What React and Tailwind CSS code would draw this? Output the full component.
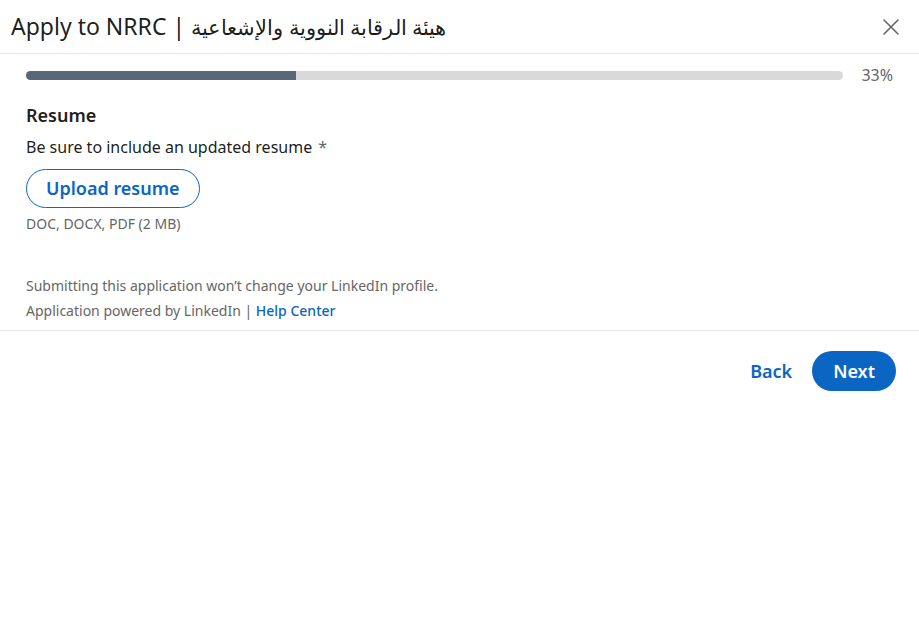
import React from "react";

const font = { fontFamily: '"Segoe UI", "Noto Sans", "Open Sans", Arial, sans-serif' };

function CloseIcon() {
  return (
    <svg width="24" height="24" viewBox="0 0 24 24" fill="none" stroke="#666666" strokeWidth="1.6" strokeLinecap="round">
      <path d="M5 5 L19 19 M19 5 L5 19" />
    </svg>
  );
}

export default function App() {
  const progress = 33;
  return (
    <div className="w-[919px] h-[625px] bg-white text-[rgba(0,0,0,0.9)]" style={font}>
      <header className="h-[54px] flex items-center justify-between pl-[11px] pr-[12px] border-b border-[#e8e8e8]">
        <h1 className="text-[23px] leading-none text-[rgba(0,0,0,0.9)] font-normal">
          Apply to NRRC | <span className="text-[21px]">هيئة الرقابة النووية والإشعاعية</span>
        </h1>
        <button className="w-[32px] h-[32px] flex items-center justify-center">
          <CloseIcon />
        </button>
      </header>

      <div className="px-[26px]">
        <div className="flex items-center gap-[16px] mt-[9px]">
          <div className="flex-1 h-[9px] rounded-full bg-[#d9d9d9] overflow-hidden">
            <div className="h-full bg-[#56687a]" style={{ width: `${progress}%` }} />
          </div>
          <span className="text-[16px] text-[#666666] w-[34px] text-right">33%</span>
        </div>

        <h2 className="mt-[16px] text-[18px] font-semibold leading-[24px]">Resume</h2>
        <p className="mt-[10px] text-[16px] leading-[20px]">
          Be sure to include an updated resume <span className="text-[#666666] ml-[2px]">*</span>
        </p>
        <button className="mt-[12px] h-[39px] px-[19px] rounded-full border border-[#0a66c2] text-[#0a66c2] text-[18px] font-semibold">
          Upload resume
        </button>
        <p className="mt-[7px] text-[14px] text-[#666666] leading-[18px]">DOC, DOCX, PDF (2 MB)</p>

        <div className="mt-[40px] text-[14px] text-[#666666] leading-[25px]">
          <p>Submitting this application won’t change your LinkedIn profile.</p>
          <p>
            Application powered by LinkedIn | <span className="text-[#0a66c2] font-medium">Help Center</span>
          </p>
        </div>
      </div>

      <div className="mt-[7px] border-t border-[#e8e8e8] flex justify-end items-center gap-[20px] px-[23px] pt-[20px]">
        <button className="text-[18px] font-semibold text-[#0a66c2] h-[40px]">Back</button>
        <button className="h-[40px] px-[21px] rounded-full bg-[#0a66c2] text-white text-[18px] font-semibold">Next</button>
      </div>
    </div>
  );
}
